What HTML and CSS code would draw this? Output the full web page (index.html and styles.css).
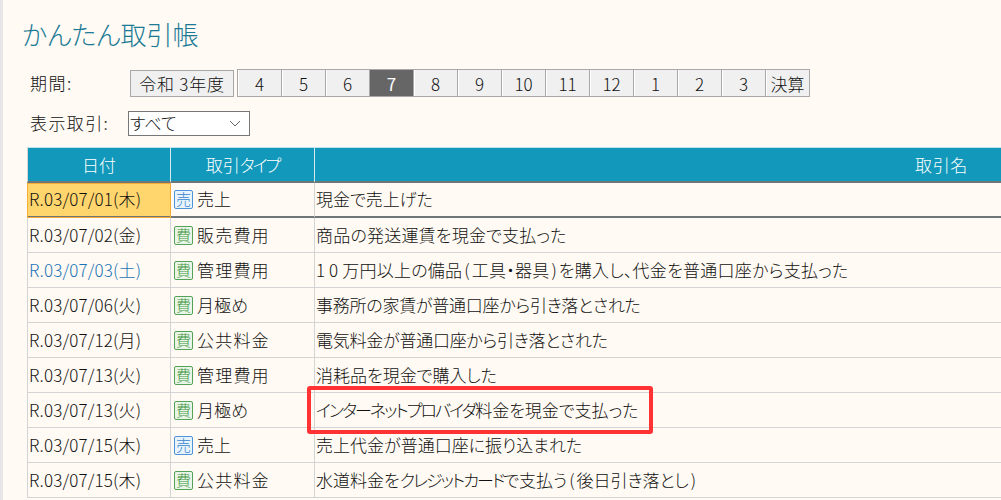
FILE: index.html
```html
<!DOCTYPE html>
<html lang="ja">
<head>
<meta charset="utf-8">
<title>かんたん取引帳</title>
<link rel="stylesheet" href="styles.css">
</head>
<body>
<div class="page">
  <h1 class="title">かんたん取引帳</h1>
  <div class="filter period">
    <span class="label">期間:</span>
    <button class="year">令和 3年度</button>
    <div class="months">
      <button>4</button><button>5</button><button>6</button><button class="on">7</button><button>8</button><button>9</button><button>10</button><button>11</button><button>12</button><button>1</button><button>2</button><button>3</button><button class="close">決算</button>
    </div>
  </div>
  <div class="filter show">
    <span class="label">表示取引:</span>
    <div class="select">すべて
      <svg class="chev" width="12" height="7" viewBox="0 0 12 7"><path d="M1 1l5 5 5-5" fill="none" stroke="#666" stroke-width="1"/></svg>
    </div>
  </div>
  <div class="tablewrap">
    <table class="grid">
      <colgroup><col class="c1"><col class="c2"><col class="c3"></colgroup>
      <thead><tr><th>日付</th><th>取引<span class="kata">タイプ</span></th><th class="hname">取引名</th></tr></thead>
      <tbody>
        <tr class="sel"><td class="date cur">R.03/07/01(木)</td><td><i class="bdg blue">売</i>売上</td><td>現金で売上げた</td></tr>
        <tr><td class="date">R.03/07/02(金)</td><td><i class="bdg green">費</i><span class="kj">販売費用</span></td><td><span class="loose">商品の発送運賃を現金で支払った</span></td></tr>
        <tr><td class="date sat">R.03/07/03(土)</td><td><i class="bdg green">費</i><span class="kj">管理費用</span></td><td class="spaced"><span class="wide">10</span>万円以上の備品<span class="par">(</span>工具・器具<span class="par">)</span>を購入し、代金を普通口座から支払った</td></tr>
        <tr><td class="date">R.03/07/06(火)</td><td><i class="bdg green">費</i>月極め</td><td><span class="tight">事務所の家賃が普通口座から引き落とされた</span></td></tr>
        <tr><td class="date">R.03/07/12(月)</td><td><i class="bdg green">費</i><span class="kj">公共料金</span></td><td><span class="tight">電気料金が普通口座から引き落とされた</span></td></tr>
        <tr><td class="date">R.03/07/13(火)</td><td><i class="bdg green">費</i><span class="kj">管理費用</span></td><td>消耗品を現金で購入した</td></tr>
        <tr><td class="date">R.03/07/13(火)</td><td><i class="bdg green">費</i>月極め</td><td><span class="kata">インターネットプロバイダ</span>料金を現金で支払った</td></tr>
        <tr><td class="date">R.03/07/15(木)</td><td><i class="bdg blue">売</i>売上</td><td>売上代金が普通口座に振り込まれた</td></tr>
        <tr><td class="date">R.03/07/15(木)</td><td><i class="bdg green">費</i><span class="kj">公共料金</span></td><td>水道料金を<span class="kata">クレジットカード</span>で支払う<span class="par">(</span>後日引き落とし<span class="par">)</span></td></tr>
      </tbody>
    </table>
  </div>
  <div class="mark"></div>
</div>
</body>
</html>
```
FILE: styles.css
```css
html, body { margin: 0; padding: 0; height: 100%; overflow: hidden; }
body {
  background: #fffaf3;
  color: #111;
  font-family: "Noto Sans CJK JP", "Noto Sans", sans-serif;
  font-size: 17px;
  font-feature-settings: "palt";
  font-weight: 300;
}
.page {
  position: relative;
  height: 500px;
  width: 1001px;
  box-sizing: border-box;
  overflow: hidden;
  border-left: 3px solid #e6e6e6;
  padding: 15px 0 0 21px;
}
.title {
  margin: 0 0 16px -2px;
  font-size: 26px;
  line-height: 38px;
  font-weight: 300;
  color: #1c7a96;
}
.filter { display: flex; align-items: center; }
.period { height: 28px; margin-left: 6px; }
.show { height: 26px; margin: 13px 0 0 6px; }
.label { width: 100px; line-height: 24px; letter-spacing: 1.5px; }
.show .label { width: 98px; letter-spacing: 1.4px; }
button {
  font: inherit;
  font-feature-settings: inherit;
  color: #111;
  padding: 0;
  background: #f0f0f0;
  border: 1px solid #a8a8a8;
  box-sizing: border-box;
}
.year { width: 104px; height: 27px; margin-right: 3px; letter-spacing: .8px; }
.months { display: flex; }
.months button { width: 45px; height: 28px; margin-left: -1px; box-shadow: inset 1px 0 0 #fff; }
.months button:first-child { margin-left: 0; }
.months .on { background: #666; color: #fff; box-shadow: none; font-weight: 400; }
.select {
  position: relative;
  box-sizing: border-box;
  width: 122px;
  height: 25px;
  line-height: 22px;
  padding-left: 1px;
  border: 1px solid #777;
  background: #fff;
}
.chev { position: absolute; right: 8px; top: 8px; }
.tablewrap { margin: 11px 0 0 3px; width: 1300px; }
.grid { border-collapse: separate; border-spacing: 0; table-layout: fixed; width: 1544px; }
.c1 { width: 144px; }
.c2 { width: 144px; }
.c3 { width: 1256px; }
.grid th {
  height: 33px;
  padding: 0;
  background: #1198bb;
  color: #fff;
  font-weight: 300;
  border-top: 1px solid #bfe3ec;
  border-right: 1px solid #d3e9ee;
  box-sizing: content-box;
}
.grid .hname { letter-spacing: .6px; padding-right: 2px; }
.grid th:first-child, .grid td:first-child { border-left: 1px solid #d4d4d4; }
.grid td {
  padding: 0 0 2px 1px;
  box-sizing: border-box;
  white-space: nowrap;
  border-right: 1px solid #d4d4d4;
  border-bottom: 1px solid #d4d4d4;
}
.grid thead th { border-bottom: 2px solid #6e7678; }
.grid tbody td { height: 35px; }
.grid tbody .sel td { border-bottom: 2px solid #6e7678; height: 35px; }
.grid .date { padding-left: 1px; letter-spacing: .15px; }
.grid .cur { background: #ffd56e; outline: 1px solid #f5ac35; outline-offset: -1px; }
.sat { color: #1a73b8; }
.kata { letter-spacing: -1.95px; }
.kj { letter-spacing: 1.2px; }
.tight { letter-spacing: -.25px; }
.loose { letter-spacing: .2px; }
.spaced { letter-spacing: .25px; }
.wide { letter-spacing: 4px; }
.par { letter-spacing: 2px; padding-left: 2px; }
.bdg {
  display: inline-block;
  box-sizing: border-box;
  width: 19px;
  height: 19px;
  margin: 0 4px 0 2px;
  border: 1px solid;
  border-radius: 2px;
  font-style: normal;
  font-size: 15px;
  line-height: 16px;
  text-align: center;
  vertical-align: 1px;
  font-feature-settings: normal;
  letter-spacing: 0;
}
.blue { color: #3a86d0; border-color: #4c93da; background: #e9f3fc; }
.green { color: #3d9440; border-color: #54a257; background: #e9f5e6; }
.mark {
  position: absolute;
  left: 304px;
  top: 386px;
  width: 346px;
  height: 48px;
  box-sizing: border-box;
  border: 4px solid #ff3333;
  border-radius: 3px;
}
```
